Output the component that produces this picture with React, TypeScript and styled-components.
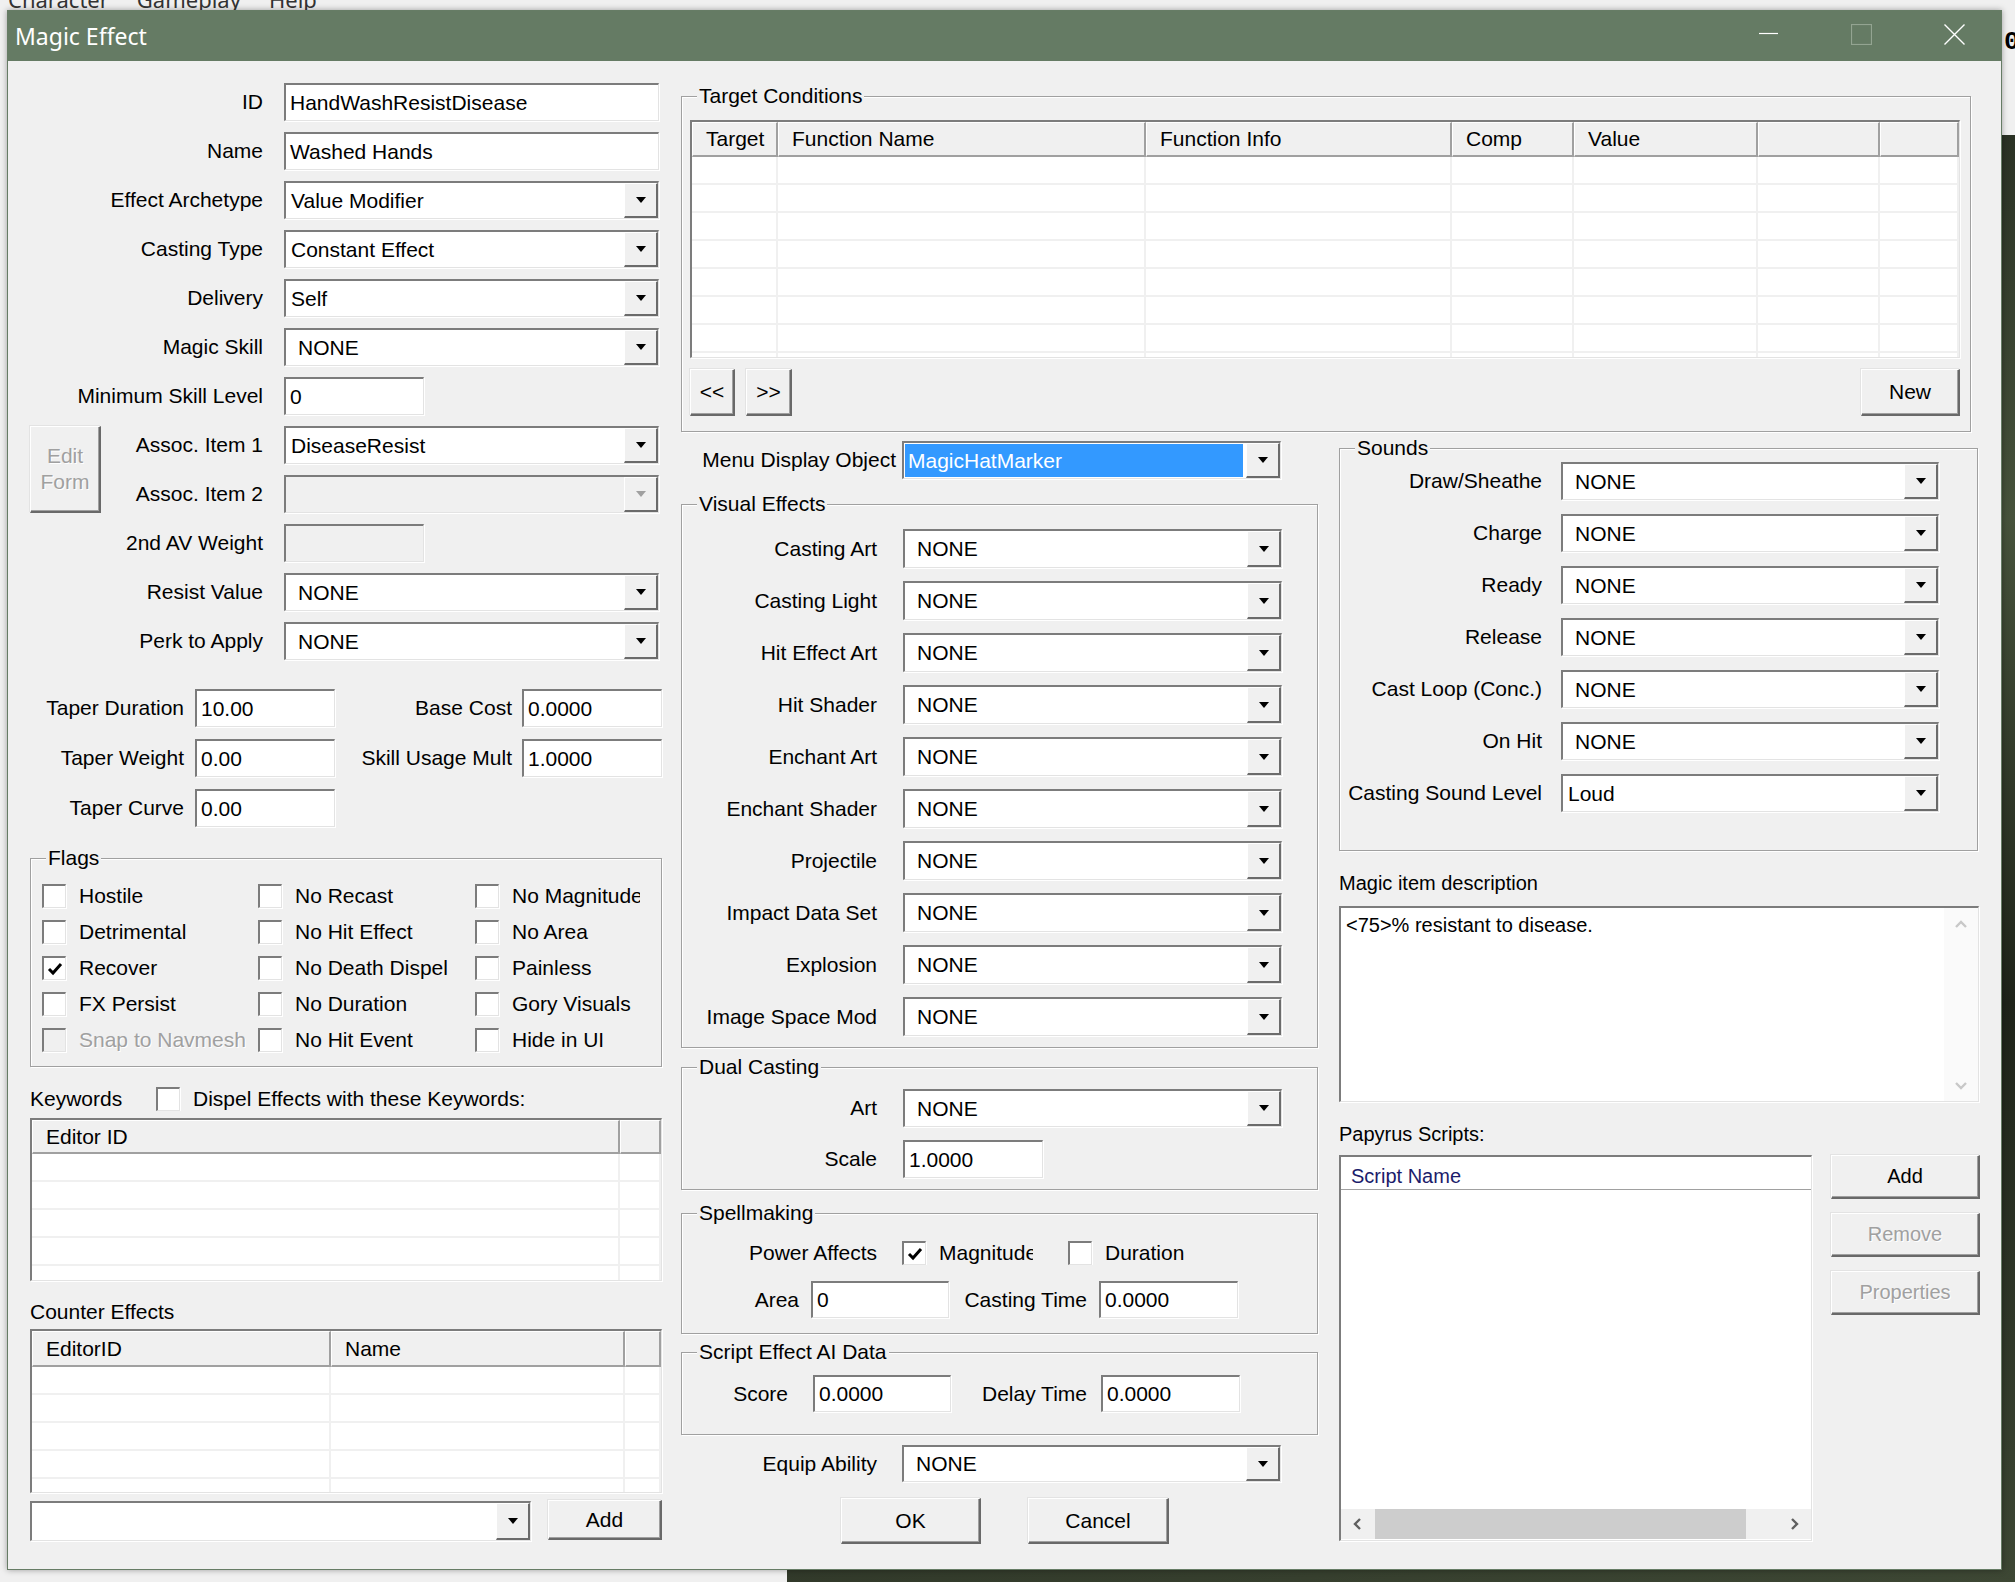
import React from "react";
import styled, { createGlobalStyle } from "styled-components";

const FONT = `"Liberation Sans", Arial, sans-serif`;
const TITLE_FONT = `"Noto Sans", "Open Sans", sans-serif`;

const GlobalStyle = createGlobalStyle`
  html, body { margin: 0; padding: 0; }
  body {
    width: 2015px;
    height: 1582px;
    overflow: hidden;
    font-family: ${FONT};
    font-size: 21px;
    color: #000;
  }
`;

/* ---------- desktop behind the dialog ---------- */

const Desktop = styled.div`
  position: relative;
  width: 2015px;
  height: 1582px;
  overflow: hidden;
  background: linear-gradient(170deg, #4d5a43 0%, #2a3124 25%, #46523b 45%, #1e2319 70%, #3d4734 100%);
`;

const BehindPane = styled.div<{ $w: number; $h: number }>`
  position: absolute;
  left: 0;
  top: 0;
  width: ${(p) => p.$w}px;
  height: ${(p) => p.$h}px;
  background: #f0f0f0;
`;

const BehindMenu = styled.div`
  position: absolute;
  left: 8px;
  top: -12px;
  display: flex;
  gap: 28px;
  font-family: ${TITLE_FONT};
  font-size: 22px;
  line-height: 22px;
  color: #333;
`;

const BehindGlyph = styled.span`
  position: absolute;
  left: 2004px;
  top: 27px;
  font-family: "Liberation Mono", monospace;
  font-weight: bold;
  font-size: 26px;
  color: #000;
`;

/* ---------- window chrome ---------- */

const Window = styled.div`
  position: absolute;
  left: 7px;
  top: 10px;
  width: 1995px;
  height: 1560px;
  box-sizing: border-box;
  border: 1px solid #667c65;
  background: #f0f0f0;
  display: flex;
  flex-direction: column;
  box-shadow: 0 0 6px rgba(0, 0, 0, 0.35);
`;

const TitleBar = styled.div`
  flex: 0 0 50px;
  background: #657b64;
  display: flex;
  align-items: center;
  padding-left: 7px;
`;

const TitleText = styled.span`
  font-family: ${TITLE_FONT};
  font-size: 23px;
  color: #fff;
`;

const CaptionButtons = styled.div`
  margin-left: auto;
  display: flex;
  height: 100%;
`;

const CaptionButton = styled.div`
  width: 93px;
  height: 100%;
  display: flex;
  align-items: center;
  justify-content: center;
  padding-bottom: 4px;
  box-sizing: border-box;
`;

const Client = styled.div`
  flex: 1;
  display: flex;
  align-items: flex-start;
  padding: 22px 0 0 22px;
`;

const LeftCol = styled.div`
  flex: none;
  width: 632px;
  display: flex;
  flex-direction: column;
`;

const RightArea = styled.div`
  flex: none;
  margin-left: 19px;
  width: 1299px;
  display: flex;
  flex-direction: column;
`;

const LowerRow = styled.div`
  display: flex;
  align-items: flex-start;
`;

const MiddleCol = styled.div`
  flex: none;
  width: 637px;
  display: flex;
  flex-direction: column;
`;

const RightCol = styled.div`
  flex: none;
  margin-left: 21px;
  width: 641px;
  display: flex;
  flex-direction: column;
`;

/* ---------- classic controls ---------- */

const sunken = `
  border-style: solid;
  border-width: 2px 1px 1px 2px;
  border-color: #7c7c7c #e3e3e3 #e3e3e3 #7c7c7c;
  box-shadow: 1px 1px 0 #fff;
`;

const TextBox = styled.div<{ $w?: number; $disabled?: boolean }>`
  ${sunken}
  box-sizing: border-box;
  width: ${(p) => (p.$w ? `${p.$w}px` : "100%")};
  height: 100%;
  display: flex;
  align-items: center;
  padding-left: 4px;
  background: ${(p) => (p.$disabled ? "#f0f0f0" : "#fff")};
  white-space: nowrap;
  overflow: hidden;
  flex: none;
`;

const ComboFrame = styled.div<{ $disabled?: boolean }>`
  ${sunken}
  box-sizing: border-box;
  width: 100%;
  height: 100%;
  display: flex;
  background: ${(p) => (p.$disabled ? "#f0f0f0" : "#fff")};
`;

const ComboValue = styled.div<{ $indent?: boolean; $selected?: boolean }>`
  flex: 1;
  display: flex;
  align-items: center;
  white-space: nowrap;
  overflow: hidden;
  padding-left: ${(p) => (p.$selected ? 3 : p.$indent ? 12 : 5)}px;
  margin: ${(p) => (p.$selected ? "1px 3px 1px 1px" : "0")};
  background: ${(p) => (p.$selected ? "#3399ff" : "transparent")};
  color: ${(p) => (p.$selected ? "#fff" : "#000")};
`;

const DropButton = styled.div`
  flex: 0 0 34px;
  box-sizing: border-box;
  background: #f0f0f0;
  border-style: solid;
  border-width: 1px 2px 2px 1px;
  border-color: #fff #6b6b6b #6b6b6b #fff;
  display: flex;
  align-items: center;
  justify-content: center;
`;

const Arrow = styled.div<{ $disabled?: boolean }>`
  width: 0;
  height: 0;
  border-left: 5px solid transparent;
  border-right: 5px solid transparent;
  border-top: 6px solid ${(p) => (p.$disabled ? "#a0a0a0" : "#000")};
`;

type ComboProps = { value: string; indent?: boolean; disabled?: boolean; selected?: boolean };

const Combo = ({ value, indent, disabled, selected }: ComboProps) => (
  <ComboFrame $disabled={disabled}>
    <ComboValue $indent={indent} $selected={selected}>
      {value}
    </ComboValue>
    <DropButton>
      <Arrow $disabled={disabled} />
    </DropButton>
  </ComboFrame>
);

const Button = styled.div<{ $w: number; $h: number; $disabled?: boolean; $stack?: boolean }>`
  flex: none;
  box-sizing: border-box;
  width: ${(p) => p.$w}px;
  height: ${(p) => p.$h}px;
  background: #f0f0f0;
  border-style: solid;
  border-width: 1px 2px 2px 1px;
  border-color: #fff #696969 #696969 #fff;
  box-shadow: inset -1px -1px 0 #a0a0a0, -1px -1px 0 #e3e3e3;
  display: flex;
  flex-direction: ${(p) => (p.$stack ? "column" : "row")};
  align-items: center;
  justify-content: center;
  line-height: ${(p) => (p.$stack ? "26px" : "normal")};
  color: ${(p) => (p.$disabled ? "#a0a0a0" : "#000")};
  text-shadow: ${(p) => (p.$disabled ? "1px 1px 0 #fff" : "none")};
  white-space: nowrap;
`;

const Box = styled.span<{ $disabled?: boolean }>`
  ${sunken}
  flex: none;
  box-sizing: border-box;
  width: 24px;
  height: 24px;
  background: ${(p) => (p.$disabled ? "#f0f0f0" : "#fff")};
  display: flex;
  align-items: center;
  justify-content: center;
`;

const CheckRow = styled.div<{ $w?: number; $disabled?: boolean }>`
  display: flex;
  align-items: center;
  gap: 13px;
  height: 100%;
  white-space: nowrap;
  overflow: hidden;
  width: ${(p) => (p.$w ? `${p.$w}px` : "auto")};
  flex: none;
  color: ${(p) => (p.$disabled ? "#a0a0a0" : "#000")};
  text-shadow: ${(p) => (p.$disabled ? "1px 1px 0 #fff" : "none")};
`;

type CheckProps = { label: string; checked?: boolean; disabled?: boolean; w?: number };

const Check = ({ label, checked, disabled, w }: CheckProps) => (
  <CheckRow $w={w} $disabled={disabled}>
    <Box $disabled={disabled}>
      {checked && (
        <svg width="16" height="16" viewBox="0 0 16 16">
          <path d="M2 8 L6 12 L14 3" fill="none" stroke="#000" strokeWidth="3" />
        </svg>
      )}
    </Box>
    <span>{label}</span>
  </CheckRow>
);

const GroupBox = styled.div<{ $pad: string; $w?: number }>`
  position: relative;
  box-sizing: border-box;
  width: ${(p) => (p.$w ? `${p.$w}px` : "auto")};
  border: 1px solid #a0a0a0;
  box-shadow: inset 1px 1px 0 #fff, 1px 1px 0 #fff;
  padding: ${(p) => p.$pad};
`;

const Caption = styled.span`
  position: absolute;
  top: -13px;
  left: 15px;
  padding: 0 2px;
  line-height: 24px;
  background: #f0f0f0;
  white-space: nowrap;
`;

const RightLabel = styled.div<{ $pad?: number }>`
  display: flex;
  align-items: center;
  justify-content: flex-end;
  padding-right: ${(p) => p.$pad ?? 0}px;
  white-space: nowrap;
`;

/* ---------- list views ---------- */

const ListFrame = styled.div<{ $h: number }>`
  ${sunken}
  box-sizing: border-box;
  height: ${(p) => p.$h}px;
  background: #fff;
  overflow: hidden;
  display: flex;
  flex-direction: column;
`;

const HeaderRow = styled.div<{ $h: number }>`
  display: flex;
  flex: 0 0 ${(p) => p.$h}px;
  background: #f0f0f0;
`;

const HeaderCell = styled.div<{ $w?: number }>`
  box-sizing: border-box;
  flex: ${(p) => (p.$w ? `0 0 ${p.$w}px` : "1 1 auto")};
  border-style: solid;
  border-width: 1px 2px 2px 1px;
  border-color: #fff #a0a0a0 #a0a0a0 #fff;
  padding-left: 13px;
  display: flex;
  align-items: center;
  white-space: nowrap;
  overflow: hidden;
`;

const BodyRow = styled.div<{ $h: number }>`
  display: flex;
  flex: 0 0 ${(p) => p.$h}px;
`;

const BodyCell = styled.div<{ $w?: number }>`
  box-sizing: border-box;
  flex: ${(p) => (p.$w ? `0 0 ${p.$w}px` : "1 1 auto")};
  border-right: 2px solid #f0f0f0;
  border-bottom: 2px solid #f0f0f0;
`;

type Column = { title: string; width?: number };

const ListView = ({ cols, rows, height, headerH }: { cols: Column[]; rows: number; height: number; headerH: number }) => (
  <ListFrame $h={height}>
    <HeaderRow $h={headerH}>
      {cols.map((c, i) => (
        <HeaderCell key={i} $w={c.width}>
          {c.title}
        </HeaderCell>
      ))}
    </HeaderRow>
    {Array.from({ length: rows }).map((_, r) => (
      <BodyRow key={r} $h={28}>
        {cols.map((c, i) => (
          <BodyCell key={i} $w={c.width} />
        ))}
      </BodyRow>
    ))}
  </ListFrame>
);

/* ---------- left column ---------- */

const FormGrid = styled.div`
  display: grid;
  grid-template-columns: 71px 183px 375px;
  grid-auto-rows: 38px;
  row-gap: 11px;
`;

const FormLabel = styled(RightLabel)<{ $row: number; $narrow?: boolean }>`
  grid-row: ${(p) => p.$row};
  grid-column: ${(p) => (p.$narrow ? "2 / 3" : "1 / 3")};
`;

const FormCell = styled.div<{ $row: number }>`
  grid-row: ${(p) => p.$row};
  grid-column: 3;
  display: flex;
`;

const EditSlot = styled.div`
  grid-row: 8 / 10;
  grid-column: 1;
`;

const TaperGrid = styled.div`
  margin-top: 29px;
  display: grid;
  grid-template-columns: 165px 140px 187px 140px;
  grid-auto-rows: 38px;
  row-gap: 12px;
`;

const FlagGrid = styled.div`
  display: grid;
  grid-template-columns: 216px 217px 1fr;
  grid-auto-rows: 36px;
`;

const KeywordsRow = styled.div`
  margin-top: 20px;
  height: 24px;
  display: flex;
  align-items: center;
`;

const KeywordsTitle = styled.span`
  width: 126px;
  flex: none;
`;

const PlainLabel = styled.div<{ $mt: number; $size?: number }>`
  margin-top: ${(p) => p.$mt}px;
  height: 24px;
  display: flex;
  align-items: center;
  font-size: ${(p) => p.$size ?? 21}px;
  white-space: nowrap;
`;

const Spaced = styled.div<{ $mt: number }>`
  margin-top: ${(p) => p.$mt}px;
`;

const CounterBar = styled.div`
  margin-top: 7px;
  height: 41px;
  display: flex;
  align-items: flex-start;
  justify-content: space-between;
`;

const CounterCombo = styled.div`
  margin-top: 1px;
  width: 501px;
  height: 40px;
`;

/* ---------- middle column ---------- */

const TargetTable = styled.div`
  height: 238px;
`;

const NavRow = styled.div`
  margin-top: 11px;
  height: 47px;
  display: flex;
  gap: 11px;
`;

const NavSpacer = styled.div`
  flex: 1;
`;

const PairGrid = styled.div<{ $label: number; $gap: number; $row: number; $rowGap: number }>`
  display: grid;
  grid-template-columns: ${(p) => p.$label}px 379px;
  column-gap: ${(p) => p.$gap}px;
  grid-auto-rows: ${(p) => p.$row}px;
  row-gap: ${(p) => p.$rowGap}px;
`;

const InlineRow = styled.div<{ $h: number; $mt?: number }>`
  display: flex;
  align-items: center;
  height: ${(p) => p.$h}px;
  margin-top: ${(p) => p.$mt ?? 0}px;
`;

const FixedLabel = styled(RightLabel)<{ $w: number }>`
  flex: none;
  width: ${(p) => p.$w}px;
  height: 100%;
`;

const Gap = styled.div<{ $w: number }>`
  flex: none;
  width: ${(p) => p.$w}px;
`;

const DialogButtons = styled.div`
  margin-top: 16px;
  height: 46px;
  display: flex;
  padding-left: 160px;
  gap: 47px;
`;

/* ---------- right column ---------- */

const SoundsGrid = styled.div`
  display: grid;
  grid-template-columns: 202px 378px;
  column-gap: 19px;
  grid-auto-rows: 38px;
  row-gap: 14px;
`;

const DescBox = styled.div`
  ${sunken}
  margin-top: 11px;
  box-sizing: border-box;
  width: 640px;
  height: 196px;
  background: #fff;
  display: flex;
  font-size: 20px;
`;

const DescText = styled.div`
  flex: 1;
  padding: 6px 0 0 5px;
  white-space: nowrap;
`;

const VScroll = styled.div`
  flex: 0 0 34px;
  background: #fafafa;
  display: flex;
  flex-direction: column;
  align-items: center;
  justify-content: space-between;
  padding: 10px 0 8px;
`;

const ScriptsRow = styled.div`
  margin-top: 9px;
  display: flex;
  align-items: flex-start;
`;

const ScriptList = styled.div`
  ${sunken}
  box-sizing: border-box;
  width: 473px;
  height: 386px;
  background: #fff;
  display: flex;
  flex-direction: column;
  font-size: 20px;
`;

const ScriptHeader = styled.div`
  flex: 0 0 33px;
  box-sizing: border-box;
  border-bottom: 1px solid #a0a0a0;
  display: flex;
  align-items: center;
  padding: 6px 0 0 10px;
  color: #1c1c6b;
`;

const ScriptBody = styled.div`
  flex: 1;
`;

const HScroll = styled.div`
  flex: 0 0 30px;
  margin-bottom: 1px;
  background: #f0f0f0;
  display: flex;
  align-items: stretch;
`;

const ScrollArrow = styled.div`
  flex: 0 0 34px;
  display: flex;
  align-items: center;
  justify-content: center;
`;

const ScrollThumb = styled.div`
  flex: 0 0 371px;
  background: #cdcdcd;
`;

const ScriptButtons = styled.div`
  margin-left: 19px;
  display: flex;
  flex-direction: column;
  gap: 14px;
  font-size: 20px;
`;

/* ---------- data ---------- */

type Field = {
  label: string;
  kind: "text" | "combo";
  value: string;
  w?: number;
  indent?: boolean;
  disabled?: boolean;
  narrow?: boolean;
};

const topFields: Field[] = [
  { label: "ID", kind: "text", value: "HandWashResistDisease" },
  { label: "Name", kind: "text", value: "Washed Hands" },
  { label: "Effect Archetype", kind: "combo", value: "Value Modifier" },
  { label: "Casting Type", kind: "combo", value: "Constant Effect" },
  { label: "Delivery", kind: "combo", value: "Self" },
  { label: "Magic Skill", kind: "combo", value: "NONE", indent: true },
  { label: "Minimum Skill Level", kind: "text", value: "0", w: 140 },
  { label: "Assoc. Item 1", kind: "combo", value: "DiseaseResist", narrow: true },
  { label: "Assoc. Item 2", kind: "combo", value: "", disabled: true, narrow: true },
  { label: "2nd AV Weight", kind: "text", value: "", w: 140, disabled: true },
  { label: "Resist Value", kind: "combo", value: "NONE", indent: true },
  { label: "Perk to Apply", kind: "combo", value: "NONE", indent: true },
];

const flags: CheckProps[] = [
  { label: "Hostile" },
  { label: "No Recast" },
  { label: "No Magnitude", w: 165 },
  { label: "Detrimental" },
  { label: "No Hit Effect" },
  { label: "No Area", w: 165 },
  { label: "Recover", checked: true },
  { label: "No Death Dispel" },
  { label: "Painless", w: 165 },
  { label: "FX Persist" },
  { label: "No Duration" },
  { label: "Gory Visuals", w: 165 },
  { label: "Snap to Navmesh", disabled: true },
  { label: "No Hit Event" },
  { label: "Hide in UI", w: 165 },
];

const visualEffects = [
  "Casting Art",
  "Casting Light",
  "Hit Effect Art",
  "Hit Shader",
  "Enchant Art",
  "Enchant Shader",
  "Projectile",
  "Impact Data Set",
  "Explosion",
  "Image Space Mod",
];

const sounds = ["Draw/Sheathe", "Charge", "Ready", "Release", "Cast Loop (Conc.)", "On Hit"];

const targetCols: Column[] = [
  { title: "Target", width: 86 },
  { title: "Function Name", width: 368 },
  { title: "Function Info", width: 306 },
  { title: "Comp", width: 122 },
  { title: "Value", width: 184 },
  { title: "", width: 122 },
  { title: "" },
];

/* ---------- icons ---------- */

const MinIcon = () => (
  <svg width="20" height="20" viewBox="0 0 20 20">
    <path d="M0 9.5 H19" stroke="#fff" strokeWidth="1.2" />
  </svg>
);

const MaxIcon = () => (
  <svg width="21" height="21" viewBox="0 0 21 21">
    <rect x="0.5" y="0.5" width="20" height="20" fill="none" stroke="#93a491" strokeWidth="1.2" />
  </svg>
);

const CloseIcon = () => (
  <svg width="21" height="21" viewBox="0 0 21 21">
    <path d="M0.5 0.5 L20.5 20.5 M20.5 0.5 L0.5 20.5" stroke="#fff" strokeWidth="1.4" />
  </svg>
);

const Chevron = ({ dir, color }: { dir: "up" | "down" | "left" | "right"; color: string }) => {
  const d = {
    up: "M2 9 L7 4 L12 9",
    down: "M2 4 L7 9 L12 4",
    left: "M9 2 L4 7 L9 12",
    right: "M5 2 L10 7 L5 12",
  }[dir];
  return (
    <svg width="14" height="14" viewBox="0 0 14 14">
      <path d={d} fill="none" stroke={color} strokeWidth="2.4" />
    </svg>
  );
};

/* ---------- app ---------- */

export default function App() {
  return (
    <>
      <GlobalStyle />
      <Desktop>
        <BehindPane $w={2015} $h={135} />
        <BehindPane $w={787} $h={1582} />
        <BehindMenu>
          <span>Character</span>
          <span>Gameplay</span>
          <span>Help</span>
        </BehindMenu>
        <BehindGlyph>0</BehindGlyph>

        <Window>
          <TitleBar>
            <TitleText>Magic Effect</TitleText>
            <CaptionButtons>
              <CaptionButton>
                <MinIcon />
              </CaptionButton>
              <CaptionButton>
                <MaxIcon />
              </CaptionButton>
              <CaptionButton>
                <CloseIcon />
              </CaptionButton>
            </CaptionButtons>
          </TitleBar>

          <Client>
            {/* left column */}
            <LeftCol>
              <FormGrid>
                {topFields.map((f, i) => (
                  <React.Fragment key={f.label}>
                    <FormLabel $row={i + 1} $narrow={f.narrow} $pad={21}>
                      {f.label}
                    </FormLabel>
                    <FormCell $row={i + 1}>
                      {f.kind === "text" ? (
                        <TextBox $w={f.w} $disabled={f.disabled}>
                          {f.value}
                        </TextBox>
                      ) : (
                        <Combo value={f.value} indent={f.indent} disabled={f.disabled} />
                      )}
                    </FormCell>
                  </React.Fragment>
                ))}
                <EditSlot>
                  <Button $w={71} $h={87} $disabled $stack>
                    <span>Edit</span>
                    <span>Form</span>
                  </Button>
                </EditSlot>
              </FormGrid>

              <TaperGrid>
                <RightLabel $pad={11}>Taper Duration</RightLabel>
                <TextBox>10.00</TextBox>
                <RightLabel $pad={10}>Base Cost</RightLabel>
                <TextBox>0.0000</TextBox>
                <RightLabel $pad={11}>Taper Weight</RightLabel>
                <TextBox>0.00</TextBox>
                <RightLabel $pad={10}>Skill Usage Mult</RightLabel>
                <TextBox>1.0000</TextBox>
                <RightLabel $pad={11}>Taper Curve</RightLabel>
                <TextBox>0.00</TextBox>
              </TaperGrid>

              <Spaced $mt={31}>
                <GroupBox $pad="19px 0 8px 11px">
                  <Caption>Flags</Caption>
                  <FlagGrid>
                    {flags.map((f) => (
                      <Check key={f.label} {...f} />
                    ))}
                  </FlagGrid>
                </GroupBox>
              </Spaced>

              <KeywordsRow>
                <KeywordsTitle>Keywords</KeywordsTitle>
                <Check label="Dispel Effects with these Keywords:" />
              </KeywordsRow>

              <Spaced $mt={7}>
                <ListView cols={[{ title: "Editor ID", width: 588 }, { title: "" }]} rows={5} height={163} headerH={34} />
              </Spaced>

              <PlainLabel $mt={19}>Counter Effects</PlainLabel>

              <Spaced $mt={5}>
                <ListView
                  cols={[{ title: "EditorID", width: 299 }, { title: "Name", width: 294 }, { title: "" }]}
                  rows={5}
                  height={164}
                  headerH={36}
                />
              </Spaced>

              <CounterBar>
                <CounterCombo>
                  <Combo value="" />
                </CounterCombo>
                <Button $w={114} $h={40}>
                  Add
                </Button>
              </CounterBar>
            </LeftCol>

            {/* middle + right */}
            <RightArea>
              <Spaced $mt={13}>
                <GroupBox $pad="23px 10px 15px 8px" $w={1290}>
                  <Caption>Target Conditions</Caption>
                  <TargetTable>
                    <ListView cols={targetCols} rows={8} height={238} headerH={35} />
                  </TargetTable>
                  <NavRow>
                    <Button $w={45} $h={47}>
                      &lt;&lt;
                    </Button>
                    <Button $w={46} $h={47}>
                      &gt;&gt;
                    </Button>
                    <NavSpacer />
                    <Button $w={99} $h={47}>
                      New
                    </Button>
                  </NavRow>
                </GroupBox>
              </Spaced>

              <LowerRow>
                <MiddleCol>
                  <Spaced $mt={9}>
                    <PairGrid $label={215} $gap={6} $row={38} $rowGap={0}>
                      <RightLabel>Menu Display Object</RightLabel>
                      <Combo value="MagicHatMarker" selected />
                    </PairGrid>
                  </Spaced>

                  <Spaced $mt={25}>
                    <GroupBox $pad="24px 0 11px 0">
                      <Caption>Visual Effects</Caption>
                      <PairGrid $label={195} $gap={26} $row={39} $rowGap={13}>
                        {visualEffects.map((v) => (
                          <React.Fragment key={v}>
                            <RightLabel>{v}</RightLabel>
                            <Combo value="NONE" indent />
                          </React.Fragment>
                        ))}
                      </PairGrid>
                    </GroupBox>
                  </Spaced>

                  <Spaced $mt={19}>
                    <GroupBox $pad="21px 0 11px 0">
                      <Caption>Dual Casting</Caption>
                      <PairGrid $label={195} $gap={26} $row={38} $rowGap={13}>
                        <RightLabel>Art</RightLabel>
                        <Combo value="NONE" indent />
                        <RightLabel>Scale</RightLabel>
                        <TextBox $w={140}>1.0000</TextBox>
                      </PairGrid>
                    </GroupBox>
                  </Spaced>

                  <Spaced $mt={23}>
                    <GroupBox $pad="27px 0 15px 0">
                      <Caption>Spellmaking</Caption>
                      <InlineRow $h={24}>
                        <FixedLabel $w={195}>Power Affects</FixedLabel>
                        <Gap $w={25} />
                        <Check label="Magnitude" checked w={131} />
                        <Gap $w={35} />
                        <Check label="Duration" />
                      </InlineRow>
                      <InlineRow $h={37} $mt={16}>
                        <FixedLabel $w={117}>Area</FixedLabel>
                        <Gap $w={12} />
                        <TextBox $w={138}>0</TextBox>
                        <FixedLabel $w={138}>Casting Time</FixedLabel>
                        <Gap $w={12} />
                        <TextBox $w={139}>0.0000</TextBox>
                      </InlineRow>
                    </GroupBox>
                  </Spaced>

                  <Spaced $mt={18}>
                    <GroupBox $pad="22px 0 22px 0">
                      <Caption>Script Effect AI Data</Caption>
                      <InlineRow $h={37}>
                        <FixedLabel $w={106}>Score</FixedLabel>
                        <Gap $w={25} />
                        <TextBox $w={138}>0.0000</TextBox>
                        <FixedLabel $w={136}>Delay Time</FixedLabel>
                        <Gap $w={14} />
                        <TextBox $w={139}>0.0000</TextBox>
                      </InlineRow>
                    </GroupBox>
                  </Spaced>

                  <Spaced $mt={10}>
                    <PairGrid $label={196} $gap={25} $row={37} $rowGap={0}>
                      <RightLabel>Equip Ability</RightLabel>
                      <Combo value="NONE" indent />
                    </PairGrid>
                  </Spaced>

                  <DialogButtons>
                    <Button $w={140} $h={46}>
                      OK
                    </Button>
                    <Button $w={141} $h={46}>
                      Cancel
                    </Button>
                  </DialogButtons>
                </MiddleCol>

                <RightCol>
                  <Spaced $mt={16}>
                    <GroupBox $pad="13px 0 38px 0" $w={639}>
                      <Caption>Sounds</Caption>
                      <SoundsGrid>
                        {sounds.map((s) => (
                          <React.Fragment key={s}>
                            <RightLabel>{s}</RightLabel>
                            <Combo value="NONE" indent />
                          </React.Fragment>
                        ))}
                        <RightLabel>Casting Sound Level</RightLabel>
                        <Combo value="Loud" />
                      </SoundsGrid>
                    </GroupBox>
                  </Spaced>

                  <PlainLabel $mt={20} $size={20}>
                    Magic item description
                  </PlainLabel>
                  <DescBox>
                    <DescText>&lt;75&gt;% resistant to disease.</DescText>
                    <VScroll>
                      <Chevron dir="up" color="#c8c8c8" />
                      <Chevron dir="down" color="#c8c8c8" />
                    </VScroll>
                  </DescBox>

                  <PlainLabel $mt={20} $size={20}>
                    Papyrus Scripts:
                  </PlainLabel>
                  <ScriptsRow>
                    <ScriptList>
                      <ScriptHeader>Script Name</ScriptHeader>
                      <ScriptBody />
                      <HScroll>
                        <ScrollArrow>
                          <Chevron dir="left" color="#606060" />
                        </ScrollArrow>
                        <ScrollThumb />
                        <NavSpacer />
                        <ScrollArrow>
                          <Chevron dir="right" color="#606060" />
                        </ScrollArrow>
                      </HScroll>
                    </ScriptList>
                    <ScriptButtons>
                      <Button $w={149} $h={44}>
                        Add
                      </Button>
                      <Button $w={149} $h={44} $disabled>
                        Remove
                      </Button>
                      <Button $w={149} $h={44} $disabled>
                        Properties
                      </Button>
                    </ScriptButtons>
                  </ScriptsRow>
                </RightCol>
              </LowerRow>
            </RightArea>
          </Client>
        </Window>
      </Desktop>
    </>
  );
}
